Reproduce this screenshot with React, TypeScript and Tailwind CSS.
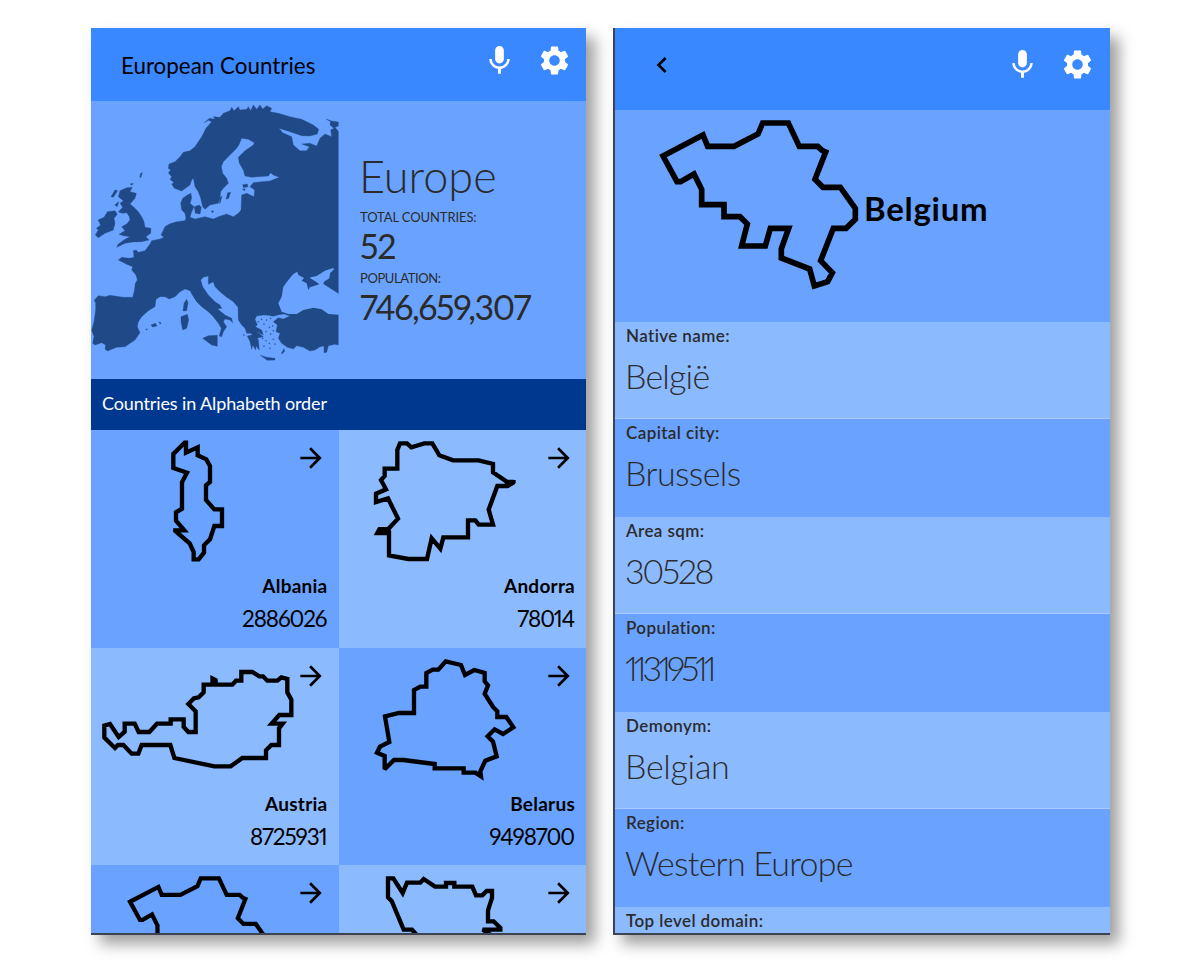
import React from "react";
import { MdArrowForward, MdChevronLeft, MdMic, MdSettings } from "react-icons/md";

const BELGIUM =
  "M174 408L294 345L308 379H387L459 342L473 309H550L583 379H638L652 392L662 396L630 478L654 502H706L751 565V598L723 625H685L647 722L682 758L668 785L628 798L614 747L529 714V686L551 625H496L481 678H410L427 612L405 590H357V554H290V508L267 462L227 485H216Z";

const ALBANIA =
  "M288 42V68L323 52V76L349 88L360 108V156L348 166V210L373 238H396V288H373L360 328L342 346V368L326 388H311V366L299 340L256 303V301H283L258 272V247L276 236V157L291 128L250 114V72L284 38H288Z";

const ANDORRA =
  "M178 116H140V138L129 150L144 178L114 191V216L150 205L180 266L150 298H124L118 309H153V376L211 387H267L281 325L307 356L316 322H390V271H412L422 284H465L452 239L478 168H507L517 162L528 156H508L465 127V102L422 91H345L304 76L283 40H259L220 52L207 40H186L178 60Z";

const AUSTRIA =
  "M43 238L60 233L86 272L104 256V232H134L146 257H178L201 232H242V219H281V242L295 257H317V195L295 173L312 156L326 153L341 138V115H427L438 103H454V77H487L508 90H519L532 103H562L574 93L592 98V138L604 160V206H568L545 232H578L567 246V296H544L528 312V335H457L422 360H373L253 335L241 296H155L145 322H125L100 296H84L75 305L43 274Z";

const BELARUS =
  "M323 45L369 56L381 86L409 71L440 80V105L450 117L440 142L465 182L478 195V212H505L526 243L495 263L470 249L449 270L465 286L476 330L442 343L427 375L429 390L412 379H377V366H290V353L196 341H168L140 369V329L117 319L126 301L154 287L141 210L183 200H228V131L247 121H265V80L284 70H301Z";

const BOSNIA =
  "M150 40H166L194 84L207 53H247L257 42L291 65H324V54H349V65H403L414 91H433L446 78H462V99L450 136V169H467L487 189V194H434L457 209V260H260L233 206L222 194H197L161 108L150 97Z";

const EUROPE_LAND =
  "M305 513L283 505L275 492L282 488L270 478L275 470L265 458L272 450L265 445L267 432L285 425L300 410L310 397L330 392L345 380L365 350L378 325L395 305L385 301L373 308L388 295L405 298L400 290L420 292L430 280L450 272L455 262L462 272L475 260L480 270L500 268L505 260L512 272L520 255L530 268L540 255L548 267L560 257L575 265L570 275L595 280L630 290L665 298L700 315L716 328L712 342L690 348L665 347L630 335L597 325L608 338L635 350L640 375L660 392L680 392L688 380L665 372L690 370L710 378L720 355L735 342L755 350L752 330L762 325L750 315L752 305L738 297L755 303L775 306V318L765 322L775 334V975L765 973L745 977L740 997L732 998L732 978L720 980L705 990L690 993L670 982L650 977L640 987L622 982L605 970L595 955L600 940L588 935L592 915L580 905L595 893L610 897L630 888L612 882L597 884L580 889L565 886L550 885L530 888L525 898L532 915L526 920L545 930L550 945L528 934L550 950L530 955L512 940L500 940L495 925L485 915L475 900L474 862L460 845L440 832L420 815L405 800L400 785L385 793V768L370 772L362 780L368 800L385 825L405 845L420 855L425 865L412 866L435 885L455 895L458 908L450 900L435 897L430 905L440 920L430 935L425 950L418 948L424 925L415 910L400 890L385 875L365 860L350 845L337 825L330 812L315 807L300 815L285 830L268 837L255 830L240 830L228 838L225 860L205 872L185 890L175 905L172 920L180 938L165 960L150 970L135 980L110 982L95 988L83 993L75 988L77 975L65 968L45 975L38 970L42 950L35 930L42 905L47 870V850L43 840L55 827L75 830L90 826L130 832H158L163 812L166 790L172 780L168 765L155 750L158 740L140 733L115 720L125 712L148 715L162 712L160 692L168 690L175 697L195 692L210 672L215 662L240 657L252 652L243 645L255 620L268 612L290 605L314 602L318 595L315 580L305 570L302 550L308 535L322 525L333 520L335 535L330 550L342 560L335 575L330 592L345 597L375 590L400 597L415 590L440 582L460 590L475 580L483 570L485 525L500 520L522 530L524 510L510 500L520 488L545 485L570 483L598 472L580 465L572 458L565 468L535 470L515 472L495 468L490 450L478 430L475 412L495 392L520 375L523 368L505 358L485 355L478 372L470 385L455 400L430 425L424 440L428 460L440 475L445 490L430 505L422 515L420 535L415 550L390 555L375 568L368 560L362 535L355 515L345 500L340 475L335 480L330 495Z";

const EUROPE_ISLANDS =
  "M120 512L140 503L157 502L150 515L169 520L165 535L150 552L160 560L175 575L185 590L192 605L195 622L213 625L212 640L198 650L207 660L185 665L160 666L135 670L110 682L115 672L135 658L150 650L130 647L117 643L135 632L125 620L140 612L150 600L148 590L140 578L128 580L115 576L128 562L120 550L130 542L115 530ZM93 530L105 510L113 512L100 532ZM104 555L116 545L112 560ZM150 492L160 490L156 496ZM179 472L182 460L187 458L183 472ZM82 575L105 572L112 583L102 595L105 610L100 630L75 640L55 653L46 645L55 630L49 625L62 615L54 600L72 592ZM320 838L324 848L320 872L309 873L312 850ZM303 890L322 883L326 900L320 925L308 930L303 905ZM368 955L385 947L412 946V979L395 975ZM213 915L226 910L231 918L218 921ZM236 906L243 908L241 913ZM197 928L202 926L200 931ZM541 1006L560 1012L585 1015V1020L562 1021ZM604 1000L612 986L614 994L606 1002ZM502 948L525 943L535 960L538 990L528 978L527 990L518 975L515 988L510 965ZM438 538L443 518L452 517L446 535ZM418 550L420 533L426 528L421 548ZM343 560L358 555L364 562L360 582L346 580ZM394 572L401 573L397 579ZM488 494L502 492L504 500L490 503ZM487 508L496 506L494 512Z";

const AEGEAN_DOTS: Array<[number, number]> = [
  [545, 898], [560, 900], [572, 895], [552, 912], [568, 922], [578, 918], [558, 935], [572, 942],
  [580, 932], [548, 955], [558, 962], [568, 970], [580, 958], [585, 972], [570, 985], [552, 978], [492, 945], [535, 905],
];

const BLACK_SEA =
  "M652 755L655 765L672 774L665 782L680 790L685 810L690 802L718 793L708 785L688 773L710 768L735 752L760 744L762 748L750 760L748 775L732 785L730 792L755 808L778 823V884L745 882L725 868L700 863L670 870L650 882L625 882L605 875L595 850L605 830L610 800L625 780L640 762Z";

function EuropeMap() {
  return (
    <svg className="block h-[277px] w-[248px] shrink-0" viewBox="33 243 744 831" aria-hidden="true">
      <g fill="#204a87" stroke="#204a87" strokeWidth="1" strokeLinejoin="round">
        <path d={EUROPE_LAND} />
        <path d={EUROPE_ISLANDS} />
        {AEGEAN_DOTS.map(([x, y]) => (
          <circle key={`${x}-${y}`} cx={x} cy={y} r="1.6" />
        ))}
      </g>
      <path d={BLACK_SEA} fill="#69a3ff" />
    </svg>
  );
}

type Country = {
  id: string;
  name?: string;
  population?: string;
  outline: string;
  extra?: string;
  transform?: string;
  top: number;
  stroke: number;
};

const COUNTRIES: Country[] = [
  { id: "al", name: "Albania", population: "2886026", outline: ALBANIA, top: 0, stroke: 13 },
  { id: "ad", name: "Andorra", population: "78014", outline: ANDORRA, extra: "M122 291H158V309L150 315H110ZM505 150H533V160L512 174L500 160Z", top: 0, stroke: 13 },
  { id: "at", name: "Austria", population: "8725931", outline: AUSTRIA, extra: "M361 86L383 97L384 114H361Z", top: 5, stroke: 13 },
  { id: "by", name: "Belarus", population: "9498700", outline: BELARUS, top: 5, stroke: 13 },
  { id: "be", outline: BELGIUM, transform: "translate(-3.2 -179) scale(.709)", top: 0, stroke: 18 },
  { id: "ba", outline: BOSNIA, top: 0, stroke: 13 },
];

function CountryCard({ country, light }: { country: Country; light: boolean }) {
  return (
    <article className={`relative flex flex-col overflow-hidden text-right text-black ${light ? "bg-[#8cbaff]" : "bg-[#69a3ff]"}`}>
      <svg
        className="block h-[140px] w-[247px] shrink-0"
        viewBox={`3 ${country.top} 741 420`}
        fill="none"
        stroke="#000"
        strokeWidth={country.stroke}
        strokeMiterlimit="2.6"
        aria-hidden="true"
      >
        <path d={country.outline} transform={country.transform} />
        {country.extra && <path d={country.extra} fill="#000" stroke="none" />}
      </svg>
      <MdArrowForward className="absolute top-[12px] right-[11.5px] size-8" />
      {country.name && (
        <>
          <h3 className="mt-[6px] pr-[11px] text-[19px] leading-[20px] font-bold tracking-[0.25px]">{country.name}</h3>
          <p className="mt-[11px] pr-[12px] text-[22.5px] leading-[24px] tracking-[-1.1px] whitespace-nowrap proportional-nums">
            {country.population}
          </p>
        </>
      )}
    </article>
  );
}

function HeaderActions() {
  return (
    <div className="flex items-center gap-5 text-white">
      <MdMic className="size-[35px]" />
      <MdSettings className="size-[35px]" />
    </div>
  );
}

const FACTS = [
  { label: "Native name:", value: "België", spacing: "tracking-[-0.8px]" },
  { label: "Capital city:", value: "Brussels", spacing: "tracking-[-0.6px]" },
  { label: "Area sqm:", value: "30528", spacing: "tracking-[-2.3px]" },
  { label: "Population:", value: "11319511", spacing: "tracking-[-4px]" },
  { label: "Demonym:", value: "Belgian", spacing: "tracking-[-0.3px]" },
  { label: "Region:", value: "Western Europe", spacing: "tracking-[-0.75px]" },
  { label: "Top level domain:" },
];

function CountriesScreen() {
  return (
    <section className="flex h-[907px] w-[495px] flex-col overflow-hidden border-b-2 border-[#3d4350] bg-[#69a3ff] shadow-[9px_9px_14px_rgba(0,0,0,0.38)]">
      <header className="flex h-[73px] shrink-0 items-start justify-between bg-[#3a88ff] pt-[15px] pr-[14px] pl-[30px]">
        <h1 className="mt-[9px] text-[22.4px] leading-[28px] whitespace-nowrap text-black">European Countries</h1>
        <HeaderActions />
      </header>
      <div className="flex h-[278px] shrink-0">
        <EuropeMap />
        <div className="flex flex-col pt-[50px] pl-[21px] whitespace-nowrap text-[#2b2b2b]">
          <h2 className="-ml-px text-[45px] leading-[50px] font-light">Europe</h2>
          <span className="mt-[8px] text-[13px] leading-[16px] tracking-[-0.1px]">TOTAL COUNTRIES:</span>
          <span className="mt-px text-[34px] leading-[40px] tracking-[-1.2px] proportional-nums">52</span>
          <span className="mt-[4px] text-[13px] leading-[16px] tracking-[-0.4px]">POPULATION:</span>
          <span className="mt-px text-[34px] leading-[40px] tracking-[-1.4px] proportional-nums">746,659,307</span>
        </div>
      </div>
      <div className="flex h-[51px] shrink-0 items-center bg-[#00388f] pb-[2px] pl-[11px] text-[18px] tracking-[-0.12px] whitespace-nowrap text-white">
        Countries in Alphabeth order
      </div>
      <div className="grid shrink-0 grid-cols-[247.5px_247.5px] auto-rows-[217.7px]">
        {COUNTRIES.map((country, i) => (
          <CountryCard key={country.id} country={country} light={i % 4 === 1 || i % 4 === 2} />
        ))}
      </div>
    </section>
  );
}

function DetailScreen() {
  return (
    <section className="flex h-[907px] w-[497px] flex-col overflow-hidden border-b-2 border-l-2 border-[#3d4350] bg-[#69a3ff] shadow-[9px_9px_14px_rgba(0,0,0,0.38)]">
      <header className="flex h-[82px] shrink-0 items-start justify-between bg-[#3a88ff] pt-[19px] pr-[15px] pl-[31px]">
        <MdChevronLeft className="mt-[2px] size-8 text-black" />
        <HeaderActions />
      </header>
      <div className="flex h-[212px] shrink-0">
        <svg className="block h-[212px] w-[249px]" viewBox="30 270 747 636" fill="none" stroke="#000" strokeWidth="17" aria-hidden="true">
          <path d={BELGIUM} />
        </svg>
        <h2 className="mt-[78px] text-[33px] leading-[40px] font-bold tracking-[0.7px] whitespace-nowrap text-black">Belgium</h2>
      </div>
      <dl className="flex flex-col whitespace-nowrap text-[#2b2b2b]">
        {FACTS.map((fact, i) => (
          <div
            key={fact.label}
            className={`flex h-[97.45px] shrink-0 flex-col pl-[11px] ${i % 2 === 0 ? "border-b border-[#a9c9ff] bg-[#8cbaff]" : "bg-[#69a3ff]"}`}
          >
            <dt className="mt-[4px] text-[17px] leading-[20px] font-semibold tracking-[0.4px]">{fact.label}</dt>
            {fact.value && (
              <dd className={`mt-[9px] -ml-px text-[34px] leading-[42px] font-light proportional-nums ${fact.spacing}`}>{fact.value}</dd>
            )}
          </div>
        ))}
      </dl>
    </section>
  );
}

export default function App() {
  return (
    <main className="flex h-[962px] w-[1200px] items-start gap-[27px] overflow-hidden bg-white pt-[28px] pl-[91px] font-['Lato','Noto_Sans',sans-serif]">
      <CountriesScreen />
      <DetailScreen />
    </main>
  );
}
